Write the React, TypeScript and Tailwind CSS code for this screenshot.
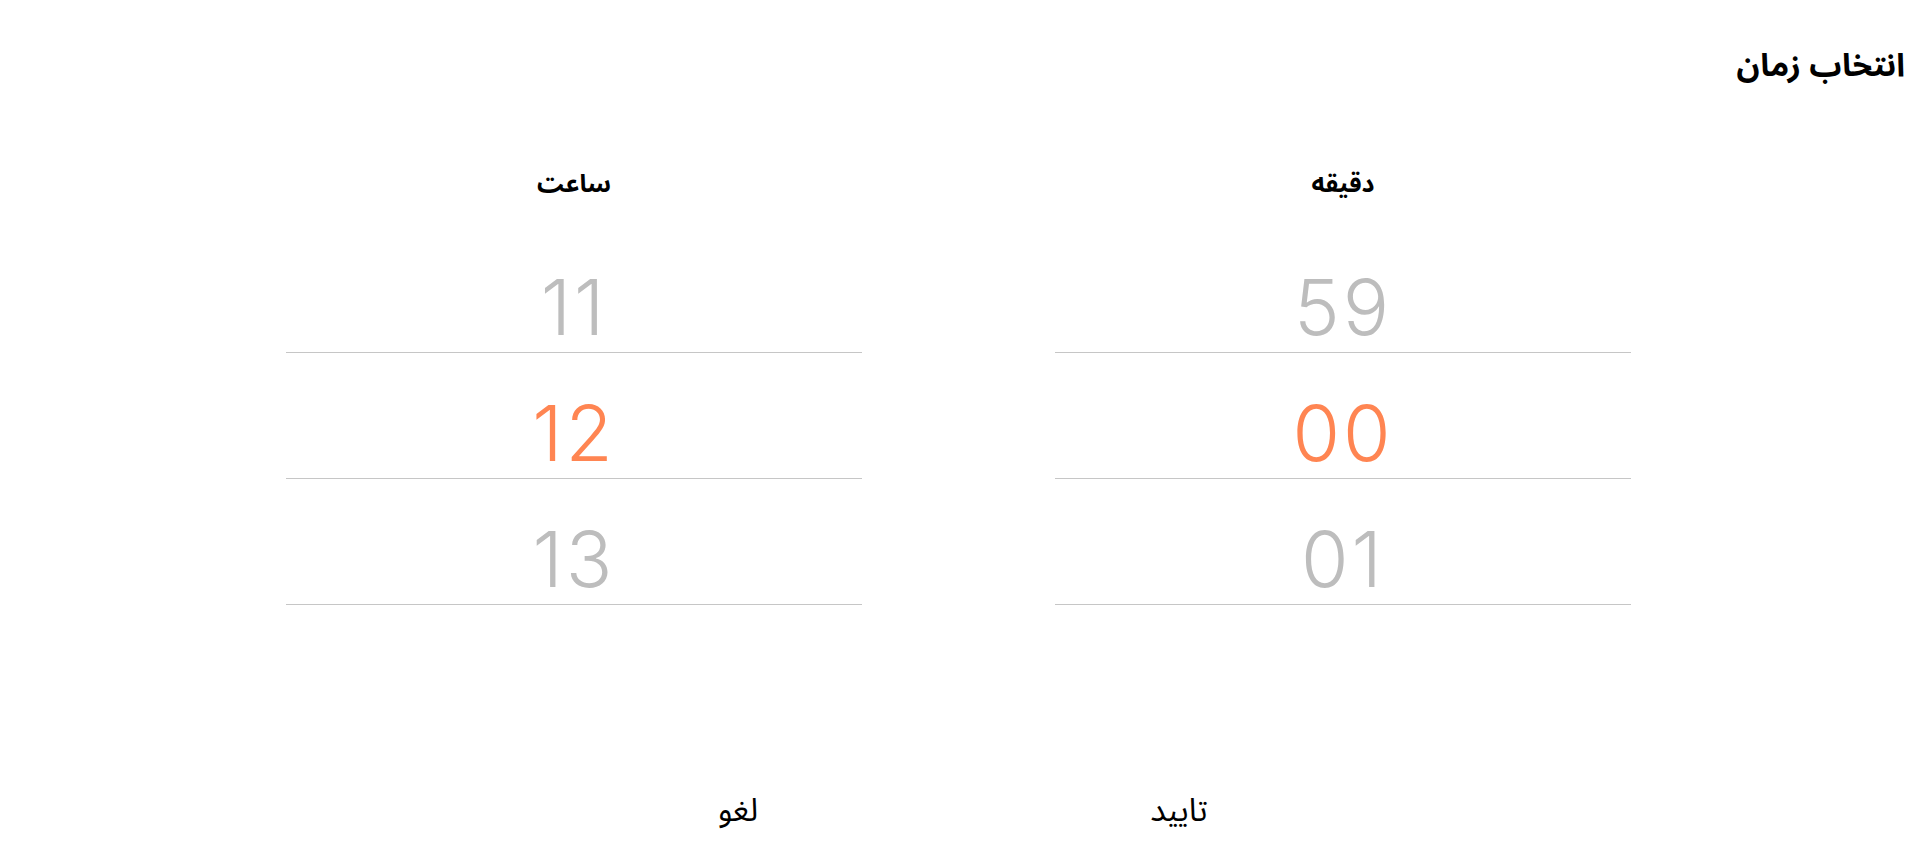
import React from 'react';

type WheelProps = {
	label: string;
	items: string[];
	selected: number;
};

const Wheel: React.FC<WheelProps> = ({ label, items, selected }): JSX.Element => {
	return (
		<div className="w-[576px] flex flex-col">
			<h3 className="text-[25px] leading-[32px] font-bold text-black text-center h-[32px] mb-[27px]">
				{label}
			</h3>
			<div className="flex flex-col" dir="ltr">
				{items.map((value, i) => (
					<div
						key={value}
						className="h-[126px] border-b border-[#c6c6c6] flex items-end justify-center pb-[17px]">
						<span
							className={
								'font-["Inter"] font-light text-[77px] leading-[56px] h-[56px] tracking-[3px] ' +
								(i === selected ? 'text-[#ff8552]' : 'text-[#bdbdbd]')
							}>
							{value}
						</span>
					</div>
				))}
			</div>
		</div>
	);
};

export default function App() {
	return (
		<div
			dir="rtl"
			className="w-full h-[850px] bg-white font-['Noto_Sans_Arabic','DejaVu_Sans',sans-serif] text-black flex flex-col">
			<h2 className="text-[32px] leading-[44px] font-bold pr-[12px] pt-[44px]">انتخاب زمان</h2>

			<div className="flex justify-center gap-[193px] mt-[80px]">
				<Wheel label="دقیقه" items={['59', '00', '01']} selected={1} />
				<Wheel label="ساعت" items={['11', '12', '13']} selected={1} />
			</div>

			<div className="flex justify-center mt-[184px]">
				<button className="w-[441px] text-center text-[32px] leading-[44px]">تایید</button>
				<button className="w-[441px] text-center text-[32px] leading-[44px]">لغو</button>
			</div>
		</div>
	);
}
